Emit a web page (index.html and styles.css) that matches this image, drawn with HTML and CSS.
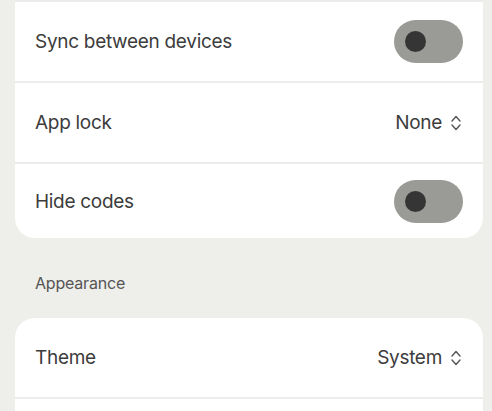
FILE: index.html
```html
<!DOCTYPE html>
<html>
<head>
<meta charset="utf-8">
<link rel="stylesheet" href="styles.css">
</head>
<body>
<div class="page">
  <section class="card card-first">
    <div class="divider"></div>
    <div class="row">
      <span class="label">Sync between devices</span>
      <span class="toggle"><span class="knob"></span></span>
    </div>
    <div class="divider"></div>
    <div class="row">
      <span class="label">App lock</span>
      <span class="value">None
        <svg class="chev" width="12" height="18" viewBox="0 0 12 18"><path d="M2 7 L6 2.5 L10 7 M2 11 L6 15.5 L10 11" fill="none" stroke="#555" stroke-width="1.4" stroke-linecap="round" stroke-linejoin="round"/></svg>
      </span>
    </div>
    <div class="divider"></div>
    <div class="row">
      <span class="label">Hide codes</span>
      <span class="toggle"><span class="knob"></span></span>
    </div>
  </section>
  <h2 class="section-title">Appearance</h2>
  <section class="card">
    <div class="row">
      <span class="label">Theme</span>
      <span class="value">System
        <svg class="chev" width="12" height="18" viewBox="0 0 12 18"><path d="M2 7 L6 2.5 L10 7 M2 11 L6 15.5 L10 11" fill="none" stroke="#555" stroke-width="1.4" stroke-linecap="round" stroke-linejoin="round"/></svg>
      </span>
    </div>
    <div class="divider"></div>
    <div class="row"></div>
  </section>
</div>
</body>
</html>
```

FILE: styles.css
```css
html, body {
  margin: 0;
  padding: 0;
  background: #eeeeea;
  font-family: Inter, "Liberation Sans", sans-serif;
  color: #3c3c3c;
  overflow: hidden;
}
.page {
  padding: 0 9px 0 15px;
}
.card {
  background: #ffffff;
  border-radius: 20px;
  overflow: hidden;
}
.card-first {
  border-top-left-radius: 0;
  border-top-right-radius: 0;
}
.row {
  height: 79px;
  display: flex;
  align-items: center;
  justify-content: space-between;
  padding: 0 20px;
}
.card-first .row:last-child {
  height: 74px;
}
.divider {
  height: 2px;
  background: #ececea;
}
.label {
  font-size: 19px;
  letter-spacing: -0.3px;
}
.value {
  display: flex;
  align-items: center;
  gap: 8px;
  font-size: 19px;
  letter-spacing: -0.3px;
  padding-right: 1px;
}
.chev {
  display: block;
}
.toggle {
  width: 69px;
  height: 43px;
  border-radius: 22px;
  background: #9a9a96;
  display: flex;
  align-items: center;
  padding-left: 11px;
  box-sizing: border-box;
}
.knob {
  width: 21px;
  height: 21px;
  border-radius: 50%;
  background: #353535;
}
.section-title {
  margin: 0;
  padding: 35px 20px 25px;
  font-size: 16px;
  font-weight: 400;
  line-height: 20px;
  color: #555;
  letter-spacing: -0.2px;
}
```
